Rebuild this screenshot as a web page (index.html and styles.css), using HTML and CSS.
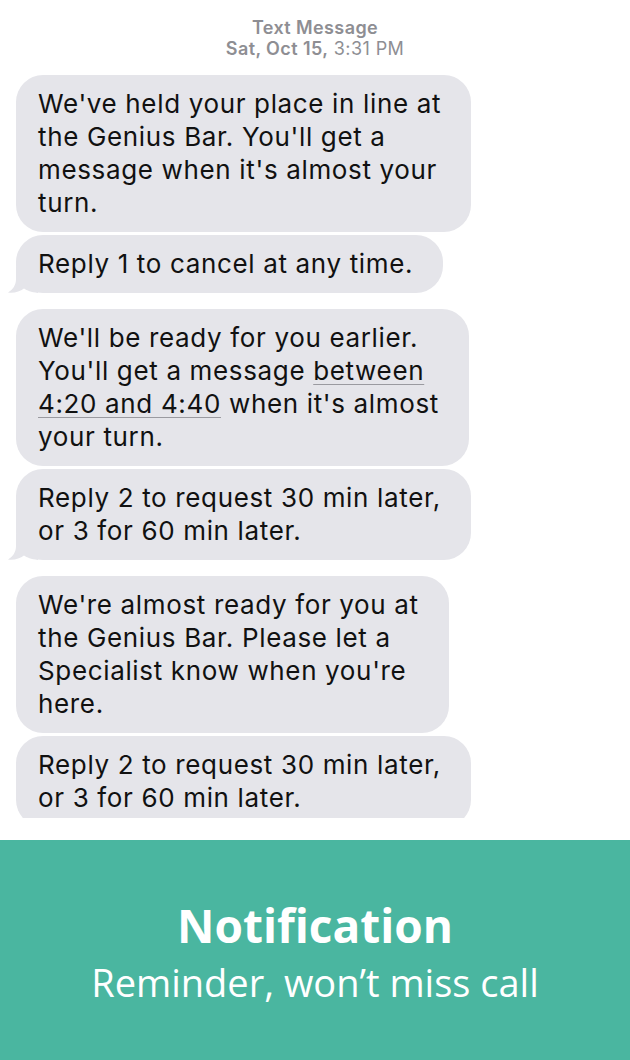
FILE: index.html
```html
<!DOCTYPE html>
<html>
<head>
<meta charset="utf-8">
<link rel="stylesheet" href="styles.css">
</head>
<body>
<div class="screen">
  <header class="meta">
    <div class="meta-title">Text Message</div>
    <div class="meta-date"><b>Sat, Oct 15,</b> 3:31 PM</div>
  </header>
  <div class="thread">
    <div class="group">
      <div class="bubble">We've held your place in line at<br>the Genius Bar. You'll get a<br>message when it's almost your<br>turn.</div>
      <div class="bubble tail">Reply 1 to cancel at any time.<svg class="tail-svg" width="30" height="26" viewBox="0 0 30 26"><path d="M8 0 L8 12 C8 18 5 22.5 0 25.5 C6 26.2 12 24.8 16 21.5 C19 23.5 23 25 30 26 L30 0 Z"/></svg></div>
    </div>
    <div class="group">
      <div class="bubble">We'll be ready for you earlier.<br>You'll get a message <span class="link">between<br>4:20 and 4:40</span> when it's almost<br>your turn.</div>
      <div class="bubble tail">Reply 2 to request 30 min later,<br>or 3 for 60 min later.<svg class="tail-svg" width="30" height="26" viewBox="0 0 30 26"><path d="M8 0 L8 12 C8 18 5 22.5 0 25.5 C6 26.2 12 24.8 16 21.5 C19 23.5 23 25 30 26 L30 0 Z"/></svg></div>
    </div>
    <div class="group">
      <div class="bubble">We're almost ready for you at<br>the Genius Bar. Please let a<br>Specialist know when you're<br>here.</div>
      <div class="bubble">Reply 2 to request 30 min later,<br>or 3 for 60 min later.</div>
    </div>
  </div>
  <section class="banner">
    <h1 class="banner-title">Notification</h1>
    <p class="banner-sub">Reminder, won’t miss call</p>
  </section>
</div>
</body>
</html>
```
FILE: styles.css
```css
* { box-sizing: border-box; }
html, body { margin: 0; padding: 0; background: #fff; }
.screen { width: 630px; height: 1060px; display: flex; flex-direction: column; overflow: hidden; }
.meta {
  padding-top: 17px;
  text-align: center;
  font-family: Inter, "Liberation Sans", sans-serif;
  font-size: 18px;
  letter-spacing: 0.4px;
  line-height: 21px;
  color: #8e8e93;
}
.meta-title { font-weight: 600; }
.meta-date { font-weight: 400; }
.meta-date b { font-weight: 600; }
.thread {
  height: 759px;
  overflow: hidden;
  padding: 16px 0 0 16px;
  display: flex;
  flex-direction: column;
  gap: 16px;
}
.group { display: flex; flex-direction: column; gap: 3px; }
.bubble {
  position: relative;
  width: fit-content;
  background: #e5e5ea;
  border-radius: 27px;
  padding: 12px 30px 13px 22px;
  font-family: Inter, "Liberation Sans", sans-serif;
  font-size: 26px;
  letter-spacing: 0.65px;
  line-height: 33px;
  color: #111;
}
.tail-svg { position: absolute; left: -8px; bottom: 0; fill: #e5e5ea; }
.link { text-decoration: underline; text-decoration-color: #9a9aa0; text-decoration-thickness: 1px; text-underline-offset: 4px; }
.banner {
  margin-top: 22px;
  flex: 1;
  background: #4ab6a0;
  color: #fff;
  text-align: center;
  font-family: "Open Sans", sans-serif;
  padding-top: 54px;
}
.banner-title { margin: 0; font-size: 46px; font-weight: 700; line-height: 62px; }
.banner-sub { margin: 0; font-size: 38px; font-weight: 400; line-height: 52px; }
```
